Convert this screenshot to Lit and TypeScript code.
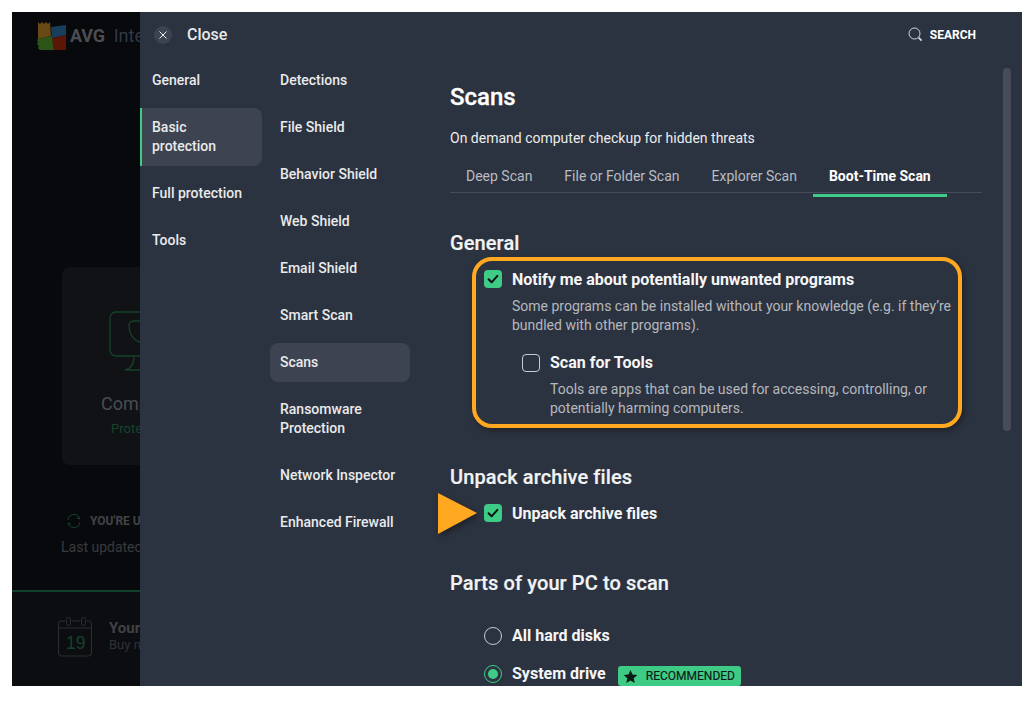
import { LitElement, html, css } from "lit";
import { customElement } from "lit/decorators.js";

const nav1 = ["General", "Basic protection", "Full protection", "Tools"];
const nav2 = ["Detections", "File Shield", "Behavior Shield", "Web Shield", "Email Shield", "Smart Scan", "Scans", "Ransomware Protection", "Network Inspector", "Enhanced Firewall"];
const tabs = ["Deep Scan", "File or Folder Scan", "Explorer Scan", "Boot-Time Scan"];

const check = html`<svg class="tick" viewBox="0 0 18 18" width="18" height="18"><path d="M4.6 9.3l3 3 5.8-6.4" fill="none" stroke="#0b0f12" stroke-width="2" stroke-linecap="round" stroke-linejoin="round"/></svg>`;

@customElement("app-root")
export class AppRoot extends LitElement {
  static styles = css`
    :host { display: block; width: 1035px; height: 701px; background: #fff; font-family: Roboto, "Liberation Sans", sans-serif; }
    .frame { position: absolute; left: 12px; top: 12px; width: 1010px; height: 674px; display: flex; overflow: hidden; background: #2c3340; }
    .dim { width: 128px; flex: none; overflow: hidden; background: #08090c; }
    .dim-inner { width: 128px; display: flex; flex-direction: column; height: 100%; }
    .brand { display: flex; align-items: center; gap: 4px; padding: 7px 0 0 25px; height: 32px; white-space: nowrap; }
    .brand b { font-size: 18px; color: #4b4d51; font-weight: 700; letter-spacing: -.2px; }
    .brand span { font-size: 18px; color: #2f3a46; margin-left: 5px; }
    .card { margin: 216px 0 0 50px; width: 300px; height: 198px; background: #111216; border-radius: 8px; padding-top: 44px; box-sizing: border-box; flex: none; white-space: nowrap; }
    .card svg { display: block; margin-left: 47px; }
    .com { font-size: 18px; color: #4a4d51; margin: 19px 0 0 39px; line-height: 24px; }
    .pro { font-size: 13px; color: #15442a; margin: 4px 0 0 49px; line-height: 18px; }
    .upd { display: flex; align-items: center; gap: 8px; margin: 48px 0 0 54px; font-size: 12px; font-weight: 700; color: #404347; white-space: nowrap; width: 300px; }
    .last { font-size: 14px; color: #383b3f; margin: 9px 0 0 49px; line-height: 18px; white-space: nowrap; width: 300px; }
    .foot { margin-top: 34px; flex: 1; border-top: 2px solid #12402a; background: #0c0d11; display: flex; gap: 15px; padding: 25px 0 0 46px; width: 300px; white-space: nowrap; }
    .foot-txt { line-height: 16px; padding-top: 3px; }
    .foot-txt b { display: block; font-size: 15px; color: #404246; }
    .foot-txt span { font-size: 13px; color: #303236; }
    .panel { flex: 1; min-width: 0; display: flex; flex-direction: column; color: #fff; position: relative; }
    .top { display: flex; align-items: center; height: 45px; flex: none; padding: 0 46px 0 14px; }
    .x { width: 18px; height: 18px; border-radius: 50%; background: #3d4350; display: flex; align-items: center; justify-content: center; }
    .close { font-size: 16px; font-weight: 500; margin-left: 15px; color: #e8e9eb; }
    .search { margin-left: auto; display: flex; align-items: center; gap: 7px; font-size: 12px; font-weight: 700; }
    .body { display: flex; flex: 1; min-height: 0; }
    .nav { display: flex; flex-direction: column; gap: 8px; padding-top: 4px; flex: none; }
    .n1 { width: 122px; }
    .n2 { width: 140px; margin-left: 8px; }
    .item { padding: 10px 12px 10px 12px; font-size: 14px; font-weight: 500; line-height: 19px; color: #e9eaec; border-radius: 0 8px 8px 0; }
    .n2 .item { padding-left: 10px; padding-right: 6px; border-radius: 8px; }
    .n1 .item { border-left: 2px solid transparent; padding-left: 10px; }
    .n1 .item.on { border-left-color: #3ecb85; background: #3d4350; }
    .n2 .item.on { background: #3d4350; }
    .content { margin-left: 40px; width: 532px; position: relative; }
    h1 { font-size: 24px; font-weight: 500; line-height: 30px; margin: 25px 0 0; color: #fff; -webkit-text-stroke: .3px #fff; }
    .sub { font-size: 14px; line-height: 19px; margin: 17px 0 0; color: #eceded; }
    .tabs { display: flex; margin-top: 9px; border-bottom: 1px solid #454b57; height: 35px; }
    .tab { font-size: 14px; line-height: 20px; padding: 9px 16px 0; color: #b9bcc2; margin-bottom: -3px; }
    .tab.on { color: #fff; font-weight: 700; border-bottom: 3px solid #3ecb85; height: 28px; }
    h2 { font-size: 20px; font-weight: 500; line-height: 26px; margin: 0; color: #f2f3f4; letter-spacing: .1px; -webkit-text-stroke: .2px #f2f3f4; }
    .g { margin-top: 37px; }
    .row { display: flex; align-items: center; gap: 10px; height: 20px; font-size: 16px; font-weight: 700; line-height: 20px; color: #f6f6f7; white-space: nowrap; }
    .low { padding-top: 2px; }
    .box { width: 18px; height: 18px; border-radius: 4px; box-sizing: border-box; flex: none; }
    .box.c { background: #3ecb85; }
    .box.u { border: 1px solid #c8cad0; }
    .desc { font-size: 14px; line-height: 19px; color: #b5b8be; margin: 8px 0 0 62px; width: 445px; }
    .r1 { margin: 13px 0 0 34px; }
    .r2 { margin: 18px 0 0 72px; }
    .desc.d2 { margin-left: 100px; width: 400px; margin-top: 7px; }
    .g2 { margin-top: 46px; }
    .r3 { margin: 13px 0 0 34px; }
    .g3 { margin-top: 47px; }
    .r4 { margin: 30px 0 0 34px; }
    .r5 { margin: 18px 0 0 34px; }
    .radio { width: 18px; height: 18px; border-radius: 50%; border: 1px solid #c8cad0; box-sizing: border-box; flex: none; display: flex; align-items: center; justify-content: center; }
    .radio.on { border-color: #3ecb85; }
    .radio.on i { width: 10px; height: 10px; border-radius: 50%; background: #3ecb85; }
    .badge { display: inline-flex; align-items: center; height: 20px; width: 123px; box-sizing: border-box; margin: 4px 0 0 2px; background: #3ecb85; border-radius: 3px; color: #0c1a16; font-size: 12px; font-weight: 400; padding-left: 5px; gap: 8px; -webkit-text-stroke: .15px #0c1a16; }
    .hl { position: absolute; left: 22px; top: 200px; width: 490px; height: 171px; box-sizing: border-box; border: 4.5px solid #ffa820; border-radius: 20px; box-shadow: 2px 3px 6px rgba(0,0,0,.35); pointer-events: none; }
    .arrow { position: absolute; left: -12px; top: 436px; filter: drop-shadow(2px 3px 3px rgba(0,0,0,.35)); }
    .thumb { position: absolute; left: 863px; top: 56px; width: 8px; height: 363px; background: #464c59; border-radius: 4px; }
  `;

  render() {
    return html`<div class="frame">
      <div class="dim"><div class="dim-inner">
        <div class="brand">
          <svg width="29" height="29" viewBox="0 0 29 29" style="flex:none"><path d="M1 1l2 2 2-2 2 2 2-2 2 2 2-2 1 14L1 18z" fill="#6a4a14"/><path d="M14 6l15-2v10l-14 3z" fill="#173f5c"/><path d="M1 18l14-3 2 14H3l-2-2 1-2-2-2 1-2-1-2z" fill="#2d5518"/><path d="M15 17l14-3v15H17z" fill="#5c1608"/></svg>
          <b>AVG</b><span>Inte</span>
        </div>
        <div class="card">
          <svg width="110" height="62" viewBox="0 0 110 62" fill="none" stroke="#14432a" stroke-width="1.3"><rect x="1" y="1" width="92" height="44" rx="6"/><path d="M25 10c-3 0-5 2-5 4 0 9 3 14 10 17 7-3 10-8 10-17 0-2-2-4-5-4z"/><path d="M25 45c0 8-3 13-9 14h24"/></svg>
          <div class="com">Computer</div>
          <div class="pro">Protected</div>
        </div>
        <div class="upd"><svg width="16" height="16" viewBox="0 0 16 16" fill="none" stroke="#14432a" stroke-width="1"><path d="M2 7a6 6 0 0 1 11-3l1 2-3-1M14 9a6 6 0 0 1-11 3L2 10l3 1"/></svg>YOU'RE UP TO DATE</div>
        <div class="last">Last updated today</div>
        <div class="foot">
          <svg width="36" height="40" viewBox="0 0 36 40" fill="none" style="flex:none"><path d="M7 4H3a2.5 2.5 0 0 0-2.500 2.500V36a3 3 0 0 0 3 3h27a3 3 0 0 0 3-3V6.500A2.500 2.500 0 0 0 32 4h-3M14 4h8" stroke="#2c2e32"/><path d="M1 11h33" stroke="#2c2e32"/><rect x="8.500" y=".5" width="4" height="8" rx="2" stroke="#2c2e32"/><rect x="23.500" y=".5" width="4" height="8" rx="2" stroke="#2c2e32"/><text x="8" y="32" font-size="17.500" fill="#14432a" font-family="Liberation Sans, sans-serif">19</text></svg>
          <div class="foot-txt"><b>Your subscription</b><span>Buy now</span></div>
        </div>
      </div></div>
      <div class="panel">
        <div class="top">
          <div class="x"><svg width="8" height="8" viewBox="0 0 8 8"><path d="M.5.5l7 7M7.5.5l-7 7" stroke="#fff" stroke-width=".9"/></svg></div>
          <div class="close">Close</div>
          <div class="search">
            <svg width="15" height="15" viewBox="0 0 15 15" fill="none" stroke="#d8dade"><circle cx="6.5" cy="6.5" r="5.5"/><path d="M10.6 10.6l3 3" stroke-width="1.6"/></svg>
            SEARCH
          </div>
        </div>
        <div class="body">
          <div class="nav n1">${nav1.map((t, i) => html`<div class="item ${i === 1 ? "on" : ""}">${t}</div>`)}</div>
          <div class="nav n2">${nav2.map((t, i) => html`<div class="item ${i === 6 ? "on" : ""}">${t}</div>`)}</div>
          <div class="content">
            <h1>Scans</h1>
            <p class="sub">On demand computer checkup for hidden threats</p>
            <div class="tabs">${tabs.map((t, i) => html`<div class="tab ${i === 3 ? "on" : ""}">${t}</div>`)}</div>
            <h2 class="g">General</h2>
            <div class="row r1"><div class="box c">${check}</div><span class="low">Notify me about potentially unwanted programs</span></div>
            <div class="desc">Some programs can be installed without your knowledge (e.g. if they’re bundled with other programs).</div>
            <div class="row r2"><div class="box u"></div>Scan for Tools</div>
            <div class="desc d2">Tools are apps that can be used for accessing, controlling, or potentially harming computers.</div>
            <h2 class="g2">Unpack archive files</h2>
            <div class="row r3"><div class="box c">${check}</div><span class="low">Unpack archive files</span></div>
            <h2 class="g3">Parts of your PC to scan</h2>
            <div class="row r4"><div class="radio"></div>All hard disks</div>
            <div class="row r5"><div class="radio on"><i></i></div>System drive
              <span class="badge"><svg width="15" height="15" viewBox="0 0 24 24"><path d="M12 1.500l3.200 7.200 7.800.8-5.900 5.200 1.700 7.700L12 18.400l-6.800 4 1.700-7.700L1 9.500l7.800-.8z" fill="#0c1a16"/></svg>RECOMMENDED</span>
            </div>
            <div class="hl"></div>
            <svg class="arrow" width="40" height="42" viewBox="0 0 40 42"><path d="M0 0l39 20L0 41z" fill="#ffa820"/></svg>
          </div>
        </div>
        <div class="thumb"></div>
      </div>
    </div>`;
  }
}
